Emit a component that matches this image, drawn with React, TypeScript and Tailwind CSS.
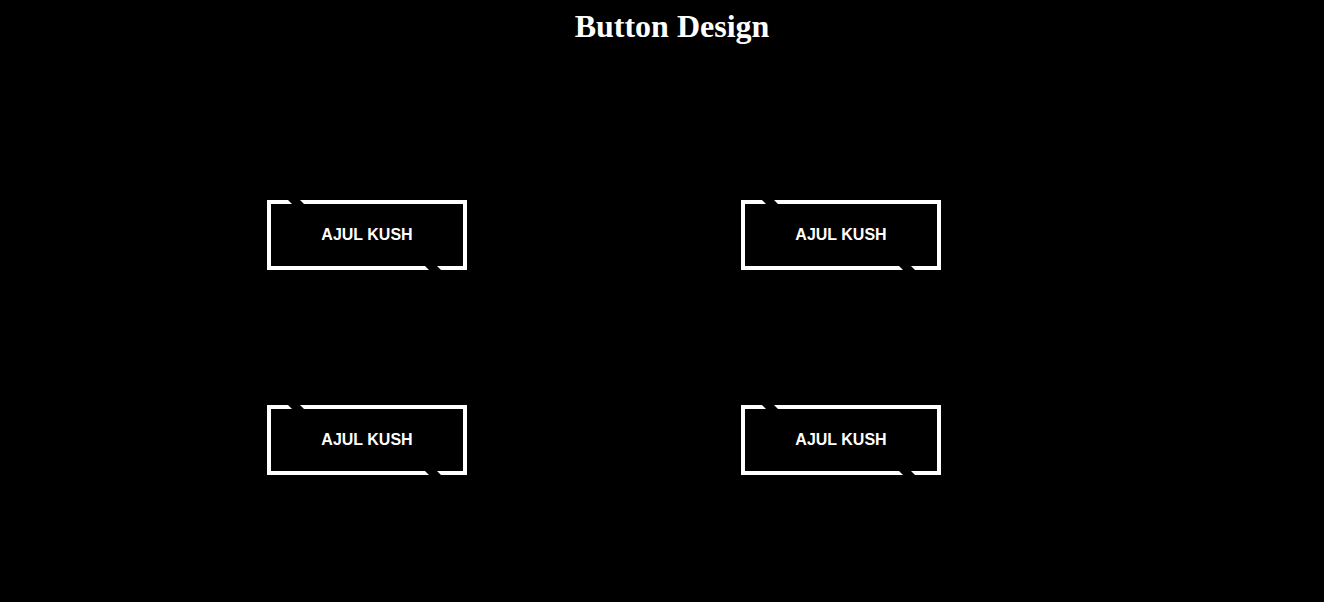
import React from "react";

function Btn() {
  return (
    <button className="relative w-[200px] h-[70px] border-4 border-white bg-black text-white font-bold text-[16px] flex items-center justify-center" style={{ fontFamily: '"Liberation Sans", Arial, sans-serif' }}>
      <span className="absolute top-[-4px] left-[19px] w-[12px] h-[4px] bg-black skew-x-[45deg]" />
      <span className="absolute bottom-[-4px] right-[24px] w-[12px] h-[4px] bg-black skew-x-[45deg]" />
      <span className="relative">AJUL KUSH</span>
    </button>
  );
}

export default function App() {
  return (
    <div className="w-[1324px] h-[602px] bg-black overflow-hidden">
      <h1 className="text-center text-white font-bold text-[32px] leading-[37px] pt-[8px] pl-[20px]" style={{ fontFamily: '"Liberation Serif", "Times New Roman", serif' }}>
        Button Design
      </h1>
      <div className="grid grid-cols-[200px_200px] gap-x-[274px] gap-y-[135px] pl-[267px] pt-[155px]">
        <Btn />
        <Btn />
        <Btn />
        <Btn />
      </div>
    </div>
  );
}
